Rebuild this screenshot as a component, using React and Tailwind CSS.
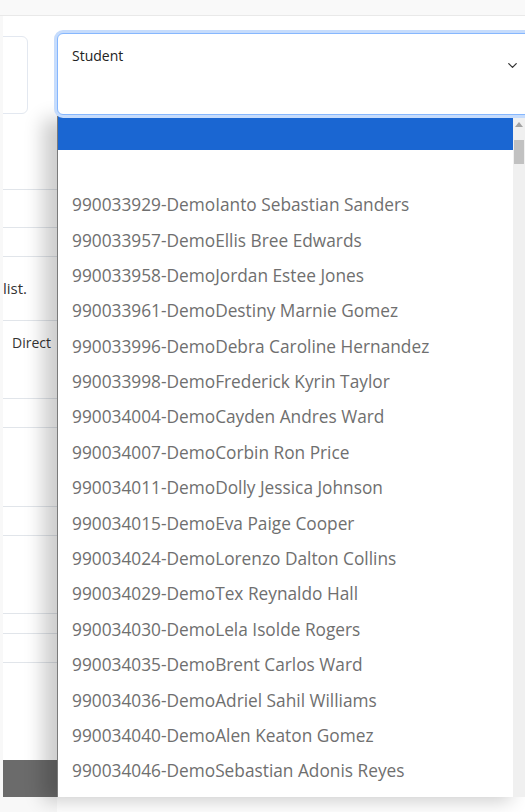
import { ChevronDown } from 'lucide-react';

const students = [
  '990033929-DemoIanto Sebastian Sanders',
  '990033957-DemoEllis Bree Edwards',
  '990033958-DemoJordan Estee Jones',
  '990033961-DemoDestiny Marnie Gomez',
  '990033996-DemoDebra Caroline Hernandez',
  '990033998-DemoFrederick Kyrin Taylor',
  '990034004-DemoCayden Andres Ward',
  '990034007-DemoCorbin Ron Price',
  '990034011-DemoDolly Jessica Johnson',
  '990034015-DemoEva Paige Cooper',
  '990034024-DemoLorenzo Dalton Collins',
  '990034029-DemoTex Reynaldo Hall',
  '990034030-DemoLela Isolde Rogers',
  '990034035-DemoBrent Carlos Ward',
  '990034036-DemoAdriel Sahil Williams',
  '990034040-DemoAlen Keaton Gomez',
  '990034046-DemoSebastian Adonis Reyes',
];

// left column rows: [height, content]
const leftRows = [
  { h: 'h-[38px]' },
  { h: 'h-[29px]' },
  { h: 'h-[64px]', text: 'list.', cls: 'justify-start pl-0 text-[15px]' },
  { h: 'h-[78px]', text: 'Direct', cls: 'justify-end pr-[6px] items-start pt-[11px] text-[14px]' },
  { h: 'h-[29px]' },
  { h: 'h-[79px]' },
  { h: 'h-[29px]' },
  { h: 'h-[78px]' },
  { h: 'h-[20px]' },
  { h: 'h-[29px]' },
];

export default function App() {
  return (
    <div
      className="w-[525px] h-[812px] overflow-hidden bg-[#f8f8f8] flex flex-col"
      style={{ fontFamily: '"Open Sans", "Noto Sans", sans-serif' }}
    >
      {/* top strip */}
      <div className="h-[16px] shrink-0 bg-[#f9f9f9] border-b border-[#e9e9e9]" />

      <div className="flex-1 flex min-h-0 pl-[3px]">
        {/* left panel */}
        <div className="w-[54px] shrink-0 bg-white flex flex-col overflow-hidden">
          <div className="h-[20px] shrink-0" />
          <div className="h-[78px] shrink-0 w-[40px] -ml-[15px] rounded-[6px] border border-[#e3e8f0]" />
          <div className="h-[75px] shrink-0" />
          {leftRows.map((r, i) => (
            <div
              key={i}
              className={`${r.h} shrink-0 border-t border-[#e1e5ea] flex items-center text-[#333] ${r.cls || ''}`}
            >
              {r.text}
            </div>
          ))}
          <div className="flex-1 border-t border-[#e1e5ea]" />
          <div className="h-[37px] shrink-0 w-[55px] bg-[#6b6b6b]" />
          <div className="h-[15px] shrink-0 bg-[#f8f8f8]" />
        </div>

        {/* right column */}
        <div className="flex-1 flex flex-col min-w-0 bg-white">
          <div className="h-[17px] shrink-0" />
          {/* select */}
          <div className="h-[82px] shrink-0 -mr-[8px] rounded-[6px] border border-[#86b7fe] ring-[3px] ring-[#c6dcfc] bg-white flex items-start justify-between pl-[14px] pr-[12px] pt-[11px] text-[14px] text-[#222] relative z-10">
            <span>Student</span>
            <ChevronDown className="w-[15px] h-[15px] mt-[13px] text-[#333]" strokeWidth={2} />
          </div>

          {/* open listbox */}
          <div className="flex-1 min-h-0 flex mb-[15px] border-l border-t border-[#7a7a7a] bg-white shadow-[-14px_4px_18px_rgba(0,0,0,0.2)] relative z-0">
            <div className="flex-1 min-w-0 flex flex-col overflow-hidden">
              <div className="h-[34px] shrink-0 bg-[#1a66d2]" />
              <div className="h-[37.4px] shrink-0" />
              {students.map((s) => (
                <div
                  key={s}
                  className="h-[35.4px] shrink-0 flex items-center pl-[14px] text-[17.3px] text-[#6f6f6f] whitespace-nowrap"
                >
                  {s}
                </div>
              ))}
            </div>
            {/* scrollbar */}
            <div className="w-[12px] shrink-0 bg-[#f0f0f0] flex flex-col items-center pt-[6px]">
              <svg width="8" height="5" viewBox="0 0 8 5">
                <path d="M0 5 L4 0 L8 5 Z" fill="#a3a3a3" />
              </svg>
              <div className="mt-[13px] w-[10px] h-[24px] bg-[#c1c1c1]" />
            </div>
          </div>
        </div>
      </div>
    </div>
  );
}
